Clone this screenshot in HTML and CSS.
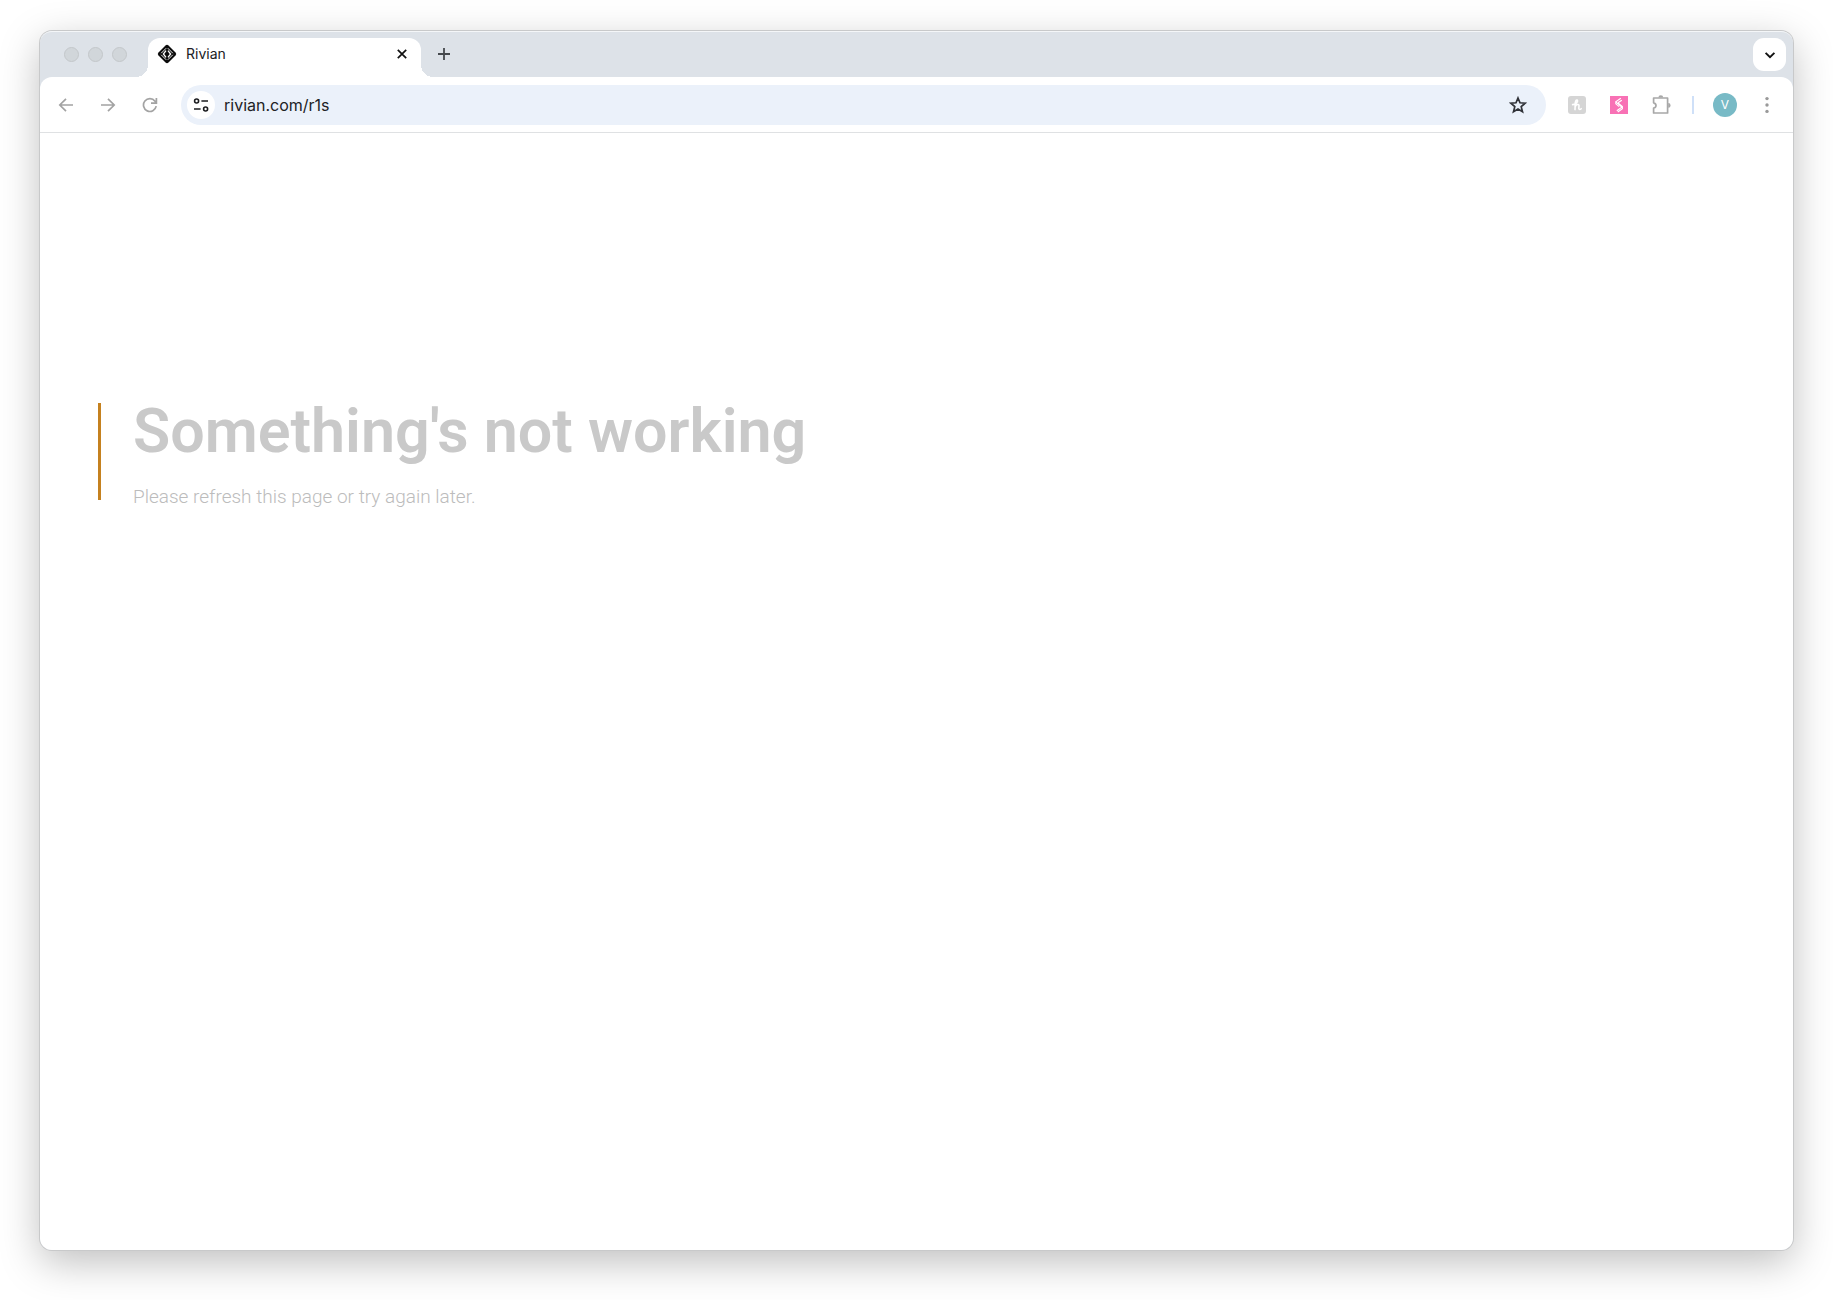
FILE: index.html
```html
<!DOCTYPE html>
<html lang="en">
<head>
    <meta charset="UTF-8">
    <meta name="viewport" content="width=device-width, initial-scale=1.0">
    <title>Rivian</title>
    <link rel="stylesheet" href="styles.css">
</head>
<body>
    <div class="window">
        <header class="tab-strip">
            <div class="window-controls">
                <button aria-label="Close window"></button>
                <button aria-label="Minimize window"></button>
                <button aria-label="Zoom window"></button>
            </div>
            <div class="tab">
                <svg class="favicon" width="20" height="20" viewBox="0 0 20 20">
                    <path d="M8.5 1.5q1.5-1.5 3 0l7 7q1.5 1.5 0 3l-7 7q-1.5 1.5-3 0l-7-7q-1.5-1.5 0-3z" fill="#0b0b0b"/>
                    <g fill="none" stroke="#fff">
                        <path d="M9.2 4.2 4.2 9.2M4.2 10.8l5 5M10.8 4.2l5 5M15.8 10.8l-5 5" stroke-width=".9"/>
                        <path d="M9 6.6 6.4 10 9 13.4M11 6.6l2.6 3.4L11 13.4" stroke-width="1.3"/>
                    </g>
                </svg>
                <span class="tab-title">Rivian</span>
                <button class="icon-button" aria-label="Close tab">
                    <svg width="12" height="12" viewBox="0 0 12 12"><path d="M1.8 1.8l8.4 8.4M10.2 1.8l-8.4 8.4" stroke="#111" stroke-width="1.7"/></svg>
                </button>
            </div>
            <button class="icon-button new-tab" aria-label="New tab">
                <svg width="14" height="14" viewBox="0 0 14 14"><path d="M7 1v12M1 7h12" stroke="#45494d" stroke-width="1.8"/></svg>
            </button>
            <button class="icon-button tab-search" aria-label="Search tabs">
                <svg width="12" height="12" viewBox="0 0 12 12"><path d="M1.6 3.8 6 8.2l4.4-4.4" fill="none" stroke="#111" stroke-width="1.9"/></svg>
            </button>
        </header>

        <nav class="toolbar">
            <div class="nav-buttons">
                <button class="icon-button" aria-label="Back">
                    <svg width="16" height="16" viewBox="0 0 16 16"><path d="M15 8H2M8 1.8 1.8 8 8 14.2" fill="none" stroke="#a3a3a3" stroke-width="1.7"/></svg>
                </button>
                <button class="icon-button" aria-label="Forward">
                    <svg width="16" height="16" viewBox="0 0 16 16"><path d="M1 8h13M8 1.8 14.2 8 8 14.2" fill="none" stroke="#a3a3a3" stroke-width="1.7"/></svg>
                </button>
                <button class="icon-button" aria-label="Reload">
                    <svg width="16" height="16" viewBox="0 0 16 16"><path d="M14.2 9.2A6.4 6.4 0 1 1 13 4.2L14.2 5.7M14.4 1v5.2H9" fill="none" stroke="#a3a3a3" stroke-width="1.7"/></svg>
                </button>
            </div>

            <div class="omnibox">
                <button class="icon-button site-info" aria-label="View site information">
                    <svg width="16" height="16" viewBox="0 0 16 16" fill="none" stroke="#1b1c1f" stroke-width="1.6">
                        <circle cx="3.6" cy="4" r="2"/>
                        <path d="M8.4 4H15M1 12h6.6"/>
                        <circle cx="12.6" cy="12" r="2"/>
                    </svg>
                </button>
                <input type="text" value="rivian.com/r1s" aria-label="Address">
                <button class="icon-button" aria-label="Bookmark this tab">
                    <svg width="18" height="18" viewBox="0 0 18 18"><path d="M9 2l2 4.8 5.2.4-4 3.4 1.3 5.1L9 13l-4.5 2.7 1.3-5.1-4-3.4L7 6.8z" fill="none" stroke="#303238" stroke-width="1.7"/></svg>
                </button>
            </div>

            <div class="extensions">
                <button class="icon-button" aria-label="Honey">
                    <svg width="20" height="20" viewBox="0 0 20 20">
                        <rect x="1" y="1" width="18" height="18" rx="3" fill="#d5d5d5"/>
                        <path d="M5.6 9.6C8.8 9.4 11 7.2 10.5 5.6 10 4.4 8.6 5.2 8.3 7.6L8 14.6M8.2 11.6c1-2.4 3.8-2.8 3.8-.9 0 1.5-.7 3.8.6 3.8.7 0 1.1-.3 1.6-.8" fill="none" stroke="#fff" stroke-width="1.6" stroke-linecap="round"/>
                    </svg>
                </button>
                <button class="icon-button" aria-label="Stylebot">
                    <svg width="20" height="20" viewBox="0 0 20 20">
                        <path d="M1 1h18v18H1z" fill="#f871b5"/>
                        <path d="M11.8 3.2 6.8 6.8l6 5.4-5 3.6M12.8 5.2 9 7.8M6.8 6.8v2l3.4 2.8M9 7.8l4.4 3.8v2.2l-4.6 3.2" fill="none" stroke="#fff" stroke-width="1.1"/>
                    </svg>
                </button>
                <button class="icon-button" aria-label="Extensions">
                    <svg width="20" height="20" viewBox="0 0 20 20">
                        <path d="M2.6 3h14v15h-14v-4.8c3.2-.6 3.2-4.8 0-5.4z" fill="none" stroke="#a8a8a8" stroke-width="1.7" stroke-linejoin="round"/>
                        <path d="M7.4 2.6a2.4 2.4 0 0 1 4.8 0zM17.2 8a2.4 2.4 0 0 1 0 4.8z" fill="#a8a8a8"/>
                    </svg>
                </button>
                <span class="divider"></span>
                <button class="avatar" aria-label="Profile">V</button>
                <button class="icon-button" aria-label="Menu">
                    <svg width="4" height="18" viewBox="0 0 4 18" fill="#999"><circle cx="2" cy="2.6" r="1.7"/><circle cx="2" cy="9" r="1.7"/><circle cx="2" cy="15.4" r="1.7"/></svg>
                </button>
            </div>
        </nav>

        <main class="page">
            <section class="error-message">
                <h1>Something's not working</h1>
                <p>Please refresh this page or try again later.</p>
            </section>
        </main>
    </div>
</body>
</html>
```

FILE: styles.css
```css
* {
    box-sizing: border-box;
}
body {
    margin: 0;
    padding: 31px 40px 50px;
    min-height: 100vh;
    display: flex;
    background-color: #fff;
    font-family: Inter, "Liberation Sans", sans-serif;
    color: #202124;
}
button {
    border: none;
    padding: 0;
    background: none;
    font-family: inherit;
    cursor: pointer;
}
.window {
    flex: 1;
    display: flex;
    flex-direction: column;
    border-radius: 12px;
    background-color: #dde2e8;
    box-shadow: 0 0 0 1px #c8c9ca, 0 12px 40px rgba(0, 0, 0, 0.26);
}
.icon-button {
    display: flex;
    align-items: center;
    justify-content: center;
    width: 20px;
    height: 20px;
    flex-shrink: 0;
}

/* tabs */
.tab-strip {
    display: flex;
    height: 46px;
    padding: 6px 7px 0 24px;
    border-top: 1px solid #f4f6f8;
    border-radius: 12px 12px 0 0;
}
.window-controls {
    display: flex;
    gap: 9px;
    padding-top: 9px;
    margin-right: 21px;
}
.window-controls button {
    width: 15px;
    height: 15px;
    border: 1px solid #c3c7ca;
    border-radius: 50%;
    background-color: #d1d6da;
}
.tab {
    position: relative;
    display: flex;
    align-items: center;
    width: 273px;
    padding: 0 9px 7px;
    border-radius: 12px 12px 0 0;
    background-color: #fff;
}
.tab::before,
.tab::after {
    content: "";
    position: absolute;
    bottom: 0;
    width: 12px;
    height: 12px;
}
.tab::before {
    right: 100%;
    background: radial-gradient(circle at 0 0, transparent 12px, #fff 12px);
}
.tab::after {
    left: 100%;
    background: radial-gradient(circle at 100% 0, transparent 12px, #fff 12px);
}
.tab-title {
    flex: 1;
    margin-left: 9px;
    font-size: 14px;
    line-height: 20px;
}
.new-tab {
    margin: 6px 0 0 13px;
}
.tab-search {
    width: 33px;
    height: 33px;
    margin-left: auto;
    border-radius: 11px;
    background-color: #fff;
}

/* address bar and extensions */
.toolbar {
    display: flex;
    align-items: center;
    height: 56px;
    padding: 0 16px;
    border-bottom: 1px solid #dfe1e3;
    border-radius: 12px 12px 0 0;
    background-color: #fff;
}
.nav-buttons {
    display: flex;
    gap: 22px;
    margin-right: 21px;
}
.omnibox {
    flex: 1;
    display: flex;
    align-items: center;
    height: 40px;
    padding: 0 18px 0 6px;
    border-radius: 20px;
    background-color: #ebf1fa;
}
.site-info {
    width: 28px;
    height: 28px;
    border-radius: 50%;
    background-color: #fff;
}
.omnibox input {
    flex: 1;
    min-width: 0;
    padding: 0 9px;
    border: none;
    outline: none;
    background: none;
    font-family: inherit;
    font-size: 16px;
    line-height: 24px;
    color: #202124;
}
.extensions {
    display: flex;
    align-items: center;
    gap: 22px;
    margin-left: 21px;
}
.divider {
    width: 2px;
    height: 18px;
    margin: 0 -3px 0 -1px;
    background-color: #cfe0f8;
}
.avatar {
    width: 24px;
    height: 24px;
    border-radius: 50%;
    background-color: #78bac6;
    color: #fff;
    font-size: 12px;
    line-height: 24px;
}
.extensions .avatar + .icon-button {
    margin-left: -2px;
}

/* page content */
.page {
    flex: 1;
    padding: 270px 58px 58px;
    border-radius: 0 0 12px 12px;
    background-color: #fff;
}
.error-message {
    height: 97px;
    padding-left: 32px;
    border-left: 3px solid #c5811f;
    font-family: Roboto, "Liberation Sans", sans-serif;
}
.error-message h1 {
    margin: 0;
    font-size: 61px;
    font-weight: 600;
    line-height: 56px;
    color: #c9c9c9;
}
.error-message p {
    margin: 24px 0 0;
    font-size: 19px;
    font-weight: 300;
    line-height: 28px;
    color: #bcbcbc;
}
```
